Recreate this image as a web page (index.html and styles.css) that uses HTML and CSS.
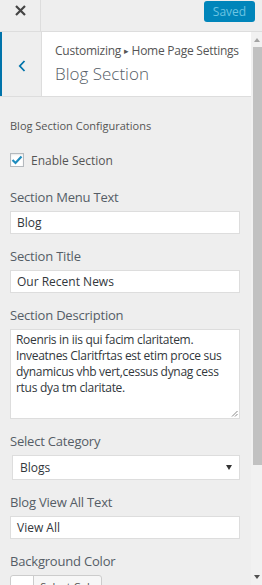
FILE: index.html
```html
<!DOCTYPE html>
<html lang="en">
<head>
  <meta charset="UTF-8">
  <meta name="viewport" content="width=device-width, initial-scale=1.0">
  <title>Customizing Blog Section</title>
  <link rel="stylesheet" href="styles.css">
</head>
<body>
  <div class="topbar">
    <div class="close">
      <svg width="11" height="11" viewBox="0 0 11 11"><path d="M1 1L10 10M10 1L1 10" stroke="#444" stroke-width="2.2"/></svg>
    </div>
    <button class="saved">Saved</button>
  </div>
  <div class="main">
    <div class="pane">
      <div class="section-head">
        <div class="back">
          <svg width="8" height="12" viewBox="0 0 8 12"><path d="M6.5 1L1.8 6L6.5 11" fill="none" stroke="#0073aa" stroke-width="1.8"/></svg>
        </div>
        <div class="head-text">
          <div class="crumb">Customizing <span class="arrow">&#9656;</span> Home Page Settings</div>
          <div class="title">Blog Section</div>
        </div>
      </div>
      <div class="controls">
        <div class="config-title">Blog Section Configurations</div>
        <label class="check">
          <span class="box">
            <svg width="12" height="10" viewBox="0 0 12 10"><path d="M1.5 5L4.5 8L10.5 1.5" fill="none" stroke="#1e8cbe" stroke-width="2.2"/></svg>
          </span>
          Enable Section
        </label>
        <div class="field">
          <div class="label">Section Menu Text</div>
          <div class="input">Blog</div>
        </div>
        <div class="field">
          <div class="label">Section Title</div>
          <div class="input">Our Recent News</div>
        </div>
        <div class="field">
          <div class="label">Section Description</div>
          <div class="textarea">Roenris in iis qui facim claritatem. Inveatnes Claritfrtas est etim proce sus dynamicus vhb vert,cessus dynag cess rtus dya tm claritate.
            <svg class="grip" width="7" height="7" viewBox="0 0 7 7"><path d="M1 6.5L6.5 1M4 6.5L6.5 4" stroke="#888" stroke-width="1"/></svg>
          </div>
        </div>
        <div class="field">
          <div class="label">Select Category</div>
          <div class="select">Blogs <span class="caret"></span></div>
        </div>
        <div class="field">
          <div class="label">Blog View All Text</div>
          <div class="input">View All</div>
        </div>
        <div class="field">
          <div class="label">Background Color</div>
          <div class="color-btn"><span class="swatch"></span><span class="color-text">Select Color</span></div>
        </div>
      </div>
    </div>
    <div class="scrollbar">
      <span class="sb-up"></span>
      <div class="thumb"></div>
      <span class="sb-down"></span>
    </div>
  </div>
</body>
</html>
```

FILE: styles.css
```css
body {
  margin: 0;
  width: 262px;
  height: 585px;
  overflow: hidden;
  font-family: "Open Sans", "Liberation Sans", sans-serif;
  background-color: #eee;
  color: #555d66;
}
.topbar {
  height: 31px;
  display: flex;
  justify-content: space-between;
  align-items: flex-start;
  border-bottom: 1px solid #ddd;
  background: #eee;
}
.close {
  width: 41px;
  height: 31px;
  border-right: 1px solid #ddd;
  display: flex;
  justify-content: center;
  padding-top: 5px;
  box-sizing: border-box;
}
.saved {
  margin: 1px 7px 0 0;
  width: 51px;
  height: 21px;
  border: none;
  border-radius: 3px;
  background-color: #0085ba;
  color: #6cc4e2;
  font-family: inherit;
  font-size: 12px;
  padding: 0;
}
.main {
  display: flex;
  height: 553px;
}
.pane {
  width: 251px;
  overflow: hidden;
}
.section-head {
  display: flex;
  height: 64px;
  border-bottom: 1px solid #ddd;
  background: #fff;
}
.back {
  width: 39px;
  background: #eee;
  border-left: 2px solid #0073aa;
  border-right: 1px solid #ddd;
  display: flex;
  align-items: center;
  justify-content: center;
  padding-top: 4px;
}
.head-text {
  padding: 10px 0 0 13px;
}
.crumb {
  font-size: 12px;
  line-height: 18px;
  letter-spacing: -0.25px;
  color: #555;
}
.arrow {
  font-size: 9px;
  position: relative;
  top: -1px;
}
.title {
  font-size: 17px;
  font-weight: 300;
  line-height: 26px;
  color: #555d66;
}
.controls {
  padding: 20px 0 0 10px;
}
.config-title {
  font-size: 11px;
  line-height: 18px;
  color: #555;
  margin-bottom: 18px;
}
.check {
  display: flex;
  align-items: center;
  font-size: 12px;
  color: #555;
  height: 14px;
  margin-bottom: 20px;
}
.box {
  width: 12px;
  height: 12px;
  border: 1px solid #b4b9be;
  background: #fff;
  margin-right: 7px;
  display: flex;
  align-items: center;
  justify-content: center;
  box-shadow: inset 0 1px 2px rgba(0,0,0,0.1);
}
.field {
  margin-bottom: 12px;
}
.label {
  font-size: 13px;
  line-height: 20px;
  letter-spacing: -0.2px;
  margin-bottom: 4px;
  color: #555d66;
}
.input {
  width: 230px;
  height: 23px;
  box-sizing: border-box;
  background: #fff;
  border: 1px solid #ddd;
  font-size: 12px;
  line-height: 21px;
  padding-left: 6px;
  color: #32373c;
}
.textarea {
  position: relative;
  width: 230px;
  height: 90px;
  box-sizing: border-box;
  background: #fff;
  border: 1px solid #ddd;
  font-size: 12px;
  line-height: 16px;
  letter-spacing: -0.3px;
  padding: 2px 5px;
  color: #32373c;
}
.grip {
  position: absolute;
  right: 1px;
  bottom: 1px;
}
.select {
  margin-left: 2px;
  width: 228px;
  height: 25px;
  box-sizing: border-box;
  background: #fff;
  border: 1px solid #ddd;
  font-size: 12px;
  line-height: 23px;
  padding-left: 7px;
  color: #32373c;
  display: flex;
  justify-content: space-between;
  align-items: center;
}
.caret {
  width: 0;
  height: 0;
  border-left: 3px solid transparent;
  border-right: 3px solid transparent;
  border-top: 5px solid #333;
  margin-right: 7px;
}
.color-btn {
  display: flex;
  width: 92px;
  height: 24px;
  box-sizing: border-box;
  border: 1px solid #ccc;
  background: #f7f7f7;
  border-radius: 3px;
}
.swatch {
  width: 27px;
  background: #fff;
  border-right: 1px solid #ccc;
  border-radius: 3px 0 0 3px;
}
.color-text {
  font-size: 11px;
  line-height: 22px;
  padding-left: 6px;
  white-space: nowrap;
  color: #555;
}
.scrollbar {
  width: 11px;
  background: #f1f1f1;
  display: flex;
  flex-direction: column;
  align-items: flex-end;
}
.sb-up {
  width: 0;
  height: 0;
  margin: 6px 2px 0 0;
  border-left: 3px solid transparent;
  border-right: 3px solid transparent;
  border-bottom: 4px solid #a3a3a3;
}
.thumb {
  width: 9px;
  height: 418px;
  margin-top: 5px;
  background: #c1c1c1;
}
.sb-down {
  width: 0;
  height: 0;
  margin: auto 2px 6px 0;
  border-left: 3px solid transparent;
  border-right: 3px solid transparent;
  border-top: 4px solid #505050;
}
```
